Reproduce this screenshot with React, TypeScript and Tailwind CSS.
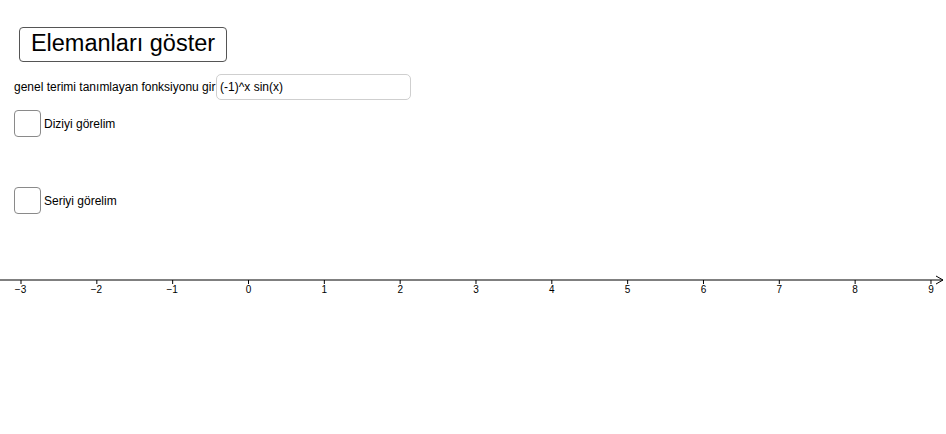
import React from "react";

const ticks = [-3, -2, -1, 0, 1, 2, 3, 4, 5, 6, 7, 8, 9];

function Axis() {
  const x0 = 248.5;
  const step = 75.83;
  return (
    <svg width="946" height="30" viewBox="0 0 946 30" className="block">
      <line x1="0" y1="10" x2="943" y2="10" stroke="#000" strokeWidth="1" />
      <polyline points="936,6 943,10 936,14" fill="none" stroke="#000" strokeWidth="1" />
      {ticks.map((n) => {
        const x = x0 + step * n;
        return (
          <g key={n}>
            <line x1={x} y1="10" x2={x} y2="14" stroke="#000" strokeWidth="1" />
            <text
              x={n < 0 ? x - 0.5 : x}
              y="23"
              fontSize="10"
              fontFamily="'Liberation Sans', Arial, sans-serif"
              textAnchor="middle"
              fill="#000"
            >
              {n < 0 ? "\u2212" + Math.abs(n) : String(n)}
            </text>
          </g>
        );
      })}
    </svg>
  );
}

function Check({ label }: { label: string }) {
  return (
    <div className="flex items-center pl-[14px]">
      <div className="w-[27px] h-[27px] border border-[#8a8a8a] rounded-[4px] bg-white" />
      <span className="ml-[3px] pt-[1px] text-[12px] text-black">{label}</span>
    </div>
  );
}

export default function App() {
  return (
    <div
      className="w-[946px] h-[434px] bg-white overflow-hidden"
      style={{ fontFamily: "'Liberation Sans', Arial, sans-serif" }}
    >
      <div className="pt-[27px] pl-[19px]">
        <button className="w-[208px] h-[35px] pb-[1px] border border-[#555] rounded-[4px] bg-white text-[23.5px] text-black leading-none flex items-center justify-center">
          Elemanları göster
        </button>
      </div>
      <div className="mt-[12px] pl-[14px] flex items-center">
        <span className="w-[202px] text-[12px] text-black whitespace-nowrap">
          genel terimi tanımlayan fonksiyonu gir
        </span>
        <div className="w-[195px] h-[26px] border border-[#cfcfcf] rounded-[5px] flex items-center pl-[3px] text-[12px] text-black">
          (-1)^x sin(x)
        </div>
      </div>
      <div className="mt-[10px]">
        <Check label="Diziyi görelim" />
      </div>
      <div className="mt-[50px]">
        <Check label="Seriyi görelim" />
      </div>
      <div className="mt-[56px]">
        <Axis />
      </div>
    </div>
  );
}
